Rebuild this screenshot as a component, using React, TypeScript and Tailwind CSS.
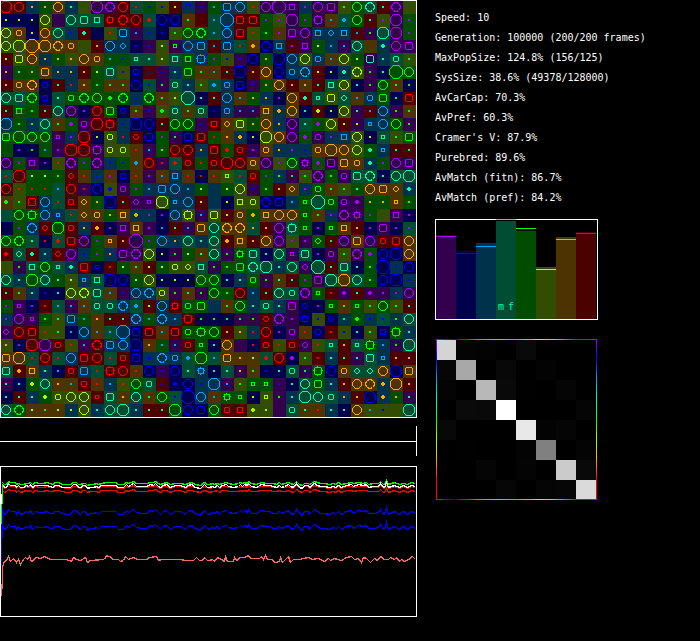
import React from 'react';

type Hue = 'v' | 'b' | 'c' | 't' | 'g' | 'y' | 'o' | 'r';

const HUES: Hue[] = ['v', 'b', 'c', 't', 'g', 'y', 'o', 'r'];
const BRIGHT: Record<string, string> = {
  v: '#aa00ff', b: '#0000ff', c: '#00a5ff', t: '#00ffaa',
  g: '#00ff00', y: '#aaff00', o: '#ffaa00', r: '#ff0000',
};
const DARK: Record<string, string> = {
  v: '#33004d', b: '#00004d', c: '#00324d', t: '#004d33',
  g: '#004d00', y: '#334d00', o: '#4d3300', r: '#4d0000',
};

// One token per deme: background hue, marker hue, marker shape.
const WORLD = [
  'rrC rre co. go. ooe ct. yy- vvC vvD rre tr. gb. yb. ry. cbc vb. gc. ccS cce yr. vve vvO vvs cv. vve vvS yg. gge ttD rt. vvD yy-',
  'by. by. by. yye vv- tte ttS tts rrg rrD rre tr+ bbe bbe og. rr- tc. ccO rrS rrS gv. yv. vvC gv. vvG oc. tc+ gge rt. yv. vvC gv.',
  'yye ooc by. ooe tte cb. rt+ bb- yr. ccS vc. cb. bb. yg. gge ggD tc. cce rrS yr. gg. ov. vvS vve ccs ccd ccs rc. vg. ttC vvC gv.',
  'yye yyC ooO ooC ooD ooc yy- ro. cce ccd bb. vb. yy. vga cce ccS rc. ccS tr. oo+ bbD ccs rv. vvs gy. cc. vc. tte oo- ct+ vve vvS',
  'ry. yyS ooe co. go. yo. ooe ooc gc. gb. tta tt. yy. tts ggs ccG gv. yb. vb. bbe go. bbC cce yye ccc oc. yye gy. vtS ct. ttc yg.',
  'vo. gt. go. ooS co. co. ro. gy. ttS yb. bbc rb. vb. ct. ggS og. oc. rt. bbC ro. ooe bbe ccc ccD ry. by. ct+ yyD vg. bt. ggO gge',
  'ro. ooc ooD bbc rt. cr. oo. gg. og. og. bbe tb. vg. ttc ct. yg. tc+ ccc bbS vb. go. ooe ro. oo. rt. tts yye bt. vg. gge og. bg.',
  'tte ttS ggD bbc tt. ggc ggD gge gg+ ggD cb. ggD og. yy. ttO bt. rt. cce oc. go. co. bv. ooe rt+ tta yyS ttd oc. ccc ggS bg. rrS',
  'rt. ggs gg. rt. tte vve bv. rre ggS bbc og. vb. yg+ ttc og. ttc bb. ccc vc. vc. oos co+ ooe bt. ry+ by. yye vt. rc. cce vg. og.',
  'ccC gg. cg. tte og. gv+ vvc rrC rrG cb. bbC bbe rt. gge gge vb. rrs ood yyS go. ooe co. vve tt. gv+ yye ry. vy. cca cce gge vg.',
  'ggS ggC gge gge vva cv. rrC by. yyc cr. rrd bbG gv. vg. bbS rrS gr. oo. co+ by. yyC ooe vve gv+ vvc cv. ccs yye by. tta yg. ggS',
  'gg- bv. bg. gc. vv. rrC rrC vvG yyc yyc or. vc. gt. rre rre co. rrS gr+ rrc vv. ooc co. cv. cb. ooc ooC ooe yye gt+ cca rt. rg.',
  'vve gv. vvs bv. yr. vvD gv. vvD cb. gb. oc+ rre vr. tr+ rrc gr. rrc rrC rre ooc vve yv. gge vvg gv+ vvS ooS ooc ct+ gv. vve vvS',
  'tr. rrC gy. gy. gg. rrd or. cb. ov. bbc or. vv. oc. ccs or. br. or. yya tr. rrc gv. cg. vg. yg. vvD gg. vvc ttS ttD bt. tte ttC',
  'rre yr. gr. gr. tc. rre vr. bbD yb+ vvc gv. cc. ccS cce cc. gy. cc- gy. yye vb. gg. ro. ood cv. ggc og. yg. gt. ooe ooS ood ct+',
  'og+ yg. rrS cce tr. rrc ood go. bbC rt. vvd vva yyC cca cce ry. cc- by. yys yyc bbD bbS cc. gga ttO ggc vvc vv+ go. go. ooa gg.',
  'tt- gge ggG cce cca tr. ood ooc go. oos co+ cv. bv. cce yyG vc. yyS ry. ooc go+ oos ooe ooe gga og. cv. vvD vvg gv. yy- vvs bv.',
  'bb- gv. ccD rrd ggC rrc co. ro+ bv. vvs oos vv. bc. rt. vc. ooS tte ooD ooD to. ro. vve ttG gga bv. gga oos ro. bv. vvS bv. tv.',
  'gge ggD tt. br. tr+ rrS vve gv. ooa ro. vvO gv. cce co. tte ct. tte ro+ oos ro. ooe vve yv. vv. ggd rg. vve ooS vve rrc rrS ooe',
  'rr+ ttd rt+ ct. rrd vve cb. gv. co. vvS vvD yye by. vg. gy. ot. tte vg. ggg ttS bt. tte vva ttS bv. vvc yg. vvD gv+ bbe bbC ooe',
  'yy- vg. tts gge tta ct+ rrS bba rr. gy. og. ry. gy. yyc yyd tts vg. gg. ggS ttD ttC ct. tte vvd ttO rt. ttS bt. gg. bbO cb. bbe',
  'tte ct. ggC tte gt. yy. cca tts bbC bbe gy. yye by. by. by. gge gge bt. ct. ggc vg. ot. rt. gv. vvS ttC ooC tte gg. bbe bbC cb.',
  'rt. og. ct. bb. bt. yye yyD ttS oc. vb. cce ccD yyc vg. og. vg. gge gg. rre cc. rt. tte ttc vvD gga rr. vv+ rt. vv+ vv. cv. vve',
  'gv. vva bv. rr. tc. vc. oc. ttc ttc ccD tc+ ry. cce rrg ggc ggS cc- og. gge ct. ttc ct. vvS bbd bv. gga og. gga yg. gge yg. rt.',
  'cv. vve vva gg. yg. ccS gc. oo. rt. rt. ccD gc. ccD cc. rrG bg. bg. bg. vg. vg. rrd vvD vv. bbg yb. bbd cg. gg+ cb. tb. cg. tte',
  'vvd rre rrS yr. yg. bc. cce oc. tc. ccO bbS rrS oc. rrS ggc ggG gge ro. yo. cr. rre bv. vvc or. bbc rr. yb. bt. yg. bbs ggG ct.',
  'yo. bv. rrC vvC rrc yr. vc. rrD ccS cce bbC oo. gc. vc. rrc gga bt. ooe vv- br. rrc yr. rrc vvd yr. tta ro. tta ggG cc. vg. ttC',
  'ooS ooC tr. rre tr. cce rrS rre tr. rrc bbS cb+ ccD ccc tc+ ggC tc. ooS oo. oy. tr+ rre bv+ yg. rr. ct. rt. vt. ttS cca ro. ro.',
  'ttS ro+ oos ct. bc. rrc ccS tr. rrG rre or. bbe vb. bbe tt. ccg bt. tt. vo. og. bb. bt. ttc vg. ggG bbe ooc ttd ttd ooe bbC ooS',
  'vt. bt. gy+ tte oo. oc. rrc or. cc. yr. gge ttc rb. bb+ bbe cb. ccC vc. yg. gga gga vb. bt. tte ggS ct. ro. ooe ooD co+ ooC ro.',
  'bt. rt. ct. gy+ yyc yye yye rra ttS oo. tte og. gge tb. bbO cce oc. ggg gga by. yya vg. ct. ttC tte ttc co. ro. bbC co+ go. vt.',
  'tte ggD oy. og. oy. cy. yye ct. tte ttC ct. rt. rt. ggC bbe bbS gge rrc rrs yy+ yy. vv- ttc ot. or. ct. bt. ooe yc. yb. yy- ttC',
].map((row) => row.split(' '));

// Eight-sided outline: n is the half extent, k the half length of a flat side.
const ring = (n: number, k: number) =>
  `M${-k},${-n}L${k},${-n}L${n},${-k}L${n},${k}L${k},${n}L${-k},${n}L${-n},${k}L${-n},${-k}Z`;

const SHAPES: Record<string, string> = {
  a: ring(1.5, 1.5),
  s: ring(2.5, 2.5),
  S: ring(3.5, 2.5),
  d: ring(2.5, 0.5),
  c: ring(2.5, 1.5),
  e: ring(4.5, 1.5),
  D: 'M-.5,-4.5H.5L2.5,-3.5L3.5,-2.5L4.5,-.5V.5L3.5,2.5L2.5,3.5L.5,4.5H-.5L-2.5,3.5L-3.5,2.5L-4.5,.5V-.5L-3.5,-2.5L-2.5,-3.5Z',
  C: ring(5.5, 2.5),
  O: ring(6.5, 2.5),
  g: ring(2.5, 2.5) + 'M-.5,-4V-2M-.5,2V4M-4,-.5H-2M2,-.5H4',
  G: ring(3.5, 2.5) + 'M-.5,-5V-3M-.5,3V5M-5,-.5H-3M3,-.5H5',
};

function Marker({ shape, color }: { shape: string; color: string }) {
  if (shape === '-') return null;
  if (shape === '.') return <rect x={-1} y={-1} width={2} height={2} fill={color} />;
  if (shape === '+') return <path d="M-1,-2H1V-1H2V1H1V2H-1V1H-2V-1H-1Z" fill={color} />;
  return <path d={SHAPES[shape]} fill="none" stroke={color} strokeWidth={1.4} />;
}

function World() {
  return (
    <svg className="block" width={417} height={418} shapeRendering="crispEdges" role="img" aria-label="World map">
      {WORLD.map((row, r) =>
        row.map((cell, c) => (
          <rect key={`${r}-${c}`} x={c * 13} y={1 + r * 13} width={13} height={13} fill={DARK[cell[0]]} />
        )),
      )}
      {WORLD.map((row, r) =>
        row.map((cell, c) => (
          <g key={`${r}-${c}`} transform={`translate(${6 + c * 13} ${7 + r * 13})`}>
            <Marker shape={cell[2]} color={BRIGHT[cell[1]]} />
          </g>
        )),
      )}
      <rect x={0.5} y={0.5} width={416} height={417} fill="none" stroke="#fff" />
    </svg>
  );
}

// Fluctuation over time in thirds of a pixel: x, y pairs.
const WAVE =
  '8,330 14,342 20,340 26,328 32,333 45,333 50,342 55,334 60,342 70,340 78,334 84,338 90,330 98,342 106,332 118,335 130,335 140,332 150,338 158,340 166,333 175,332 186,340 200,342 212,342 220,330 228,330 234,340 240,342 250,334 256,334 262,345 270,340 280,340 290,336 296,342 304,334 320,333 345,333 355,342 370,342 378,330 385,336 400,328 410,336 425,338 440,338 450,330 460,333 465,328 475,336 480,342 490,334 500,330 512,342 525,334 540,334 555,342 565,334 575,330 585,340 600,345 612,330 622,340 629,342 636,336 644,340 651,334 659,342 666,334 679,331 686,337 699,340 714,337 721,331 727,337 734,331 741,335 746,328 754,338 769,340 784,330 799,334 809,334 819,338 829,340 839,332 844,340 852,336 864,331 871,338 879,342 889,328 899,340 906,345 914,334 924,334 929,342 944,328 952,333 961,338 974,338 989,343 999,336 1006,342 1014,333 1024,343 1039,334 1054,331 1061,338 1074,330 1089,334 1099,330 1104,340 1124,338 1134,336 1142,328 1149,342 1154,342 1160,322 1165,342 1184,332 1199,343 1209,334 1222,342 1234,333 1246,338';
const PINK =
  '4,543 6,486 8,453 12,438 20,436 26,424 32,438 40,431 50,442 55,434 62,448 70,434 76,428 82,434 88,424 94,438 108,426 120,430 132,425 150,432 200,432 215,438 221,426 230,432 240,436 256,428 262,442 270,436 312,434 320,422 333,426 338,434 355,434 360,438 370,436 377,424 384,432 400,428 412,432 440,432 448,428 468,425 475,436 485,434 500,434 510,432 525,432 540,434 555,436 580,436 590,427 598,436 608,436 614,428 622,436 629,437 636,432 644,438 652,428 664,434 672,438 677,424 682,438 699,438 704,428 710,436 722,426 734,428 746,421 752,430 779,431 785,423 790,432 797,421 802,432 814,432 827,442 837,438 842,427 848,442 856,434 866,423 872,442 879,432 899,434 924,428 936,434 954,430 974,438 984,431 992,436 1002,430 1012,434 1024,435 1039,428 1054,425 1064,432 1076,430 1084,442 1091,427 1099,430 1111,442 1124,430 1132,436 1142,424 1152,434 1164,434 1172,428 1182,432 1189,428 1199,438 1204,432 1212,439 1224,433 1236,425 1246,434';

const pairs = (s: string) => s.split(' ').map((p) => p.split(',').map(Number));
const line = (pts: number[][]) =>
  pts.map(([x, y]) => `${Math.floor(x / 3) + 0.5},${Math.floor((y - 153) / 3) + 0.5}`).join(' ');
const series = (center: number, gain: number) =>
  line(pairs(WAVE).map(([x, y]) => [x, center + (y - 337) * gain]));

const SERIES = [
  { color: '#ff0000', points: series(217, 0.5) },
  { color: '#ff0000', points: series(229, 0.5) },
  { color: '#0000ff', points: series(293, 1) },
  { color: '#0000ff', points: series(338, 1) },
  { color: '#ff6666', points: line(pairs(PINK)) },
  { color: '#00ff00', points: series(206, 0.6) },
  { color: '#ffffff', points: series(214, 0.8) },
];

function History() {
  return (
    <svg className="mt-2.5 block" width={417} height={151} shapeRendering="crispEdges" role="img" aria-label="History">
      {SERIES.map((s, i) => (
        <polyline key={i} points={s.points} fill="none" stroke={s.color} strokeWidth={1.3} />
      ))}
      <path d="M1.5,58V99M2.5,42V72" stroke="#0000ff" />
      <path d="M1.5,37V58M2.5,18V38" stroke="#00ff00" />
      <path d="M1.5,28V38" stroke="#fff" />
      <rect x={0.5} y={0.5} width={416} height={150} fill="none" stroke="#fff" />
    </svg>
  );
}

const STATS = [
  'Speed: 10',
  'Generation: 100000 (200/200 frames)',
  'MaxPopSize: 124.8% (156/125)',
  'SysSize: 38.6% (49378/128000)',
  'AvCarCap: 70.3%',
  'AvPref: 60.3%',
  "Cramer's V: 87.9%",
  'Purebred: 89.6%',
  'AvMatch (fitn): 86.7%',
  'AvMatch (pref): 84.2%',
];

// Top of the bar and of its marker, measured down from the frame.
const BARS = [[16, 17], [32, 34], [24, 27], [2, 0], [12, 9], [48, 50], [18, 20], [13, 14]];

function Bars() {
  return (
    <svg className="mt-[11px] block" width={163} height={101} shapeRendering="crispEdges" role="img" aria-label="Trait frequencies">
      <rect x={0.5} y={0.5} width={162} height={100} fill="none" stroke="#fff" />
      {BARS.map(([top, mark], i) => (
        <g key={i}>
          <rect x={1 + i * 20} y={top} width={20} height={100 - top} fill={DARK[HUES[i]]} />
          <rect x={1 + i * 20} y={mark} width={20} height={1} fill={BRIGHT[HUES[i]]} />
        </g>
      ))}
      <text x={63} y={91} fill={BRIGHT.t} className="font-['DejaVu_Sans_Mono',monospace] text-[10px]">m</text>
      <text x={73} y={91} fill={BRIGHT.t} className="font-['DejaVu_Sans_Mono',monospace] text-[10px]">f</text>
    </svg>
  );
}

const MATRIX = [
  [212, 4, 3, 0, 9, 0, 0, 0],
  [6, 168, 0, 8, 0, 3, 0, 0],
  [4, 0, 184, 9, 1, 0, 5, 0],
  [0, 10, 9, 255, 0, 0, 0, 5],
  [8, 0, 0, 0, 232, 3, 5, 0],
  [0, 1, 0, 0, 3, 128, 0, 4],
  [0, 0, 5, 0, 4, 0, 203, 9],
  [0, 0, 0, 6, 0, 5, 6, 218],
];

function Matrix() {
  const stops = HUES.map((h, i) => <stop key={h} offset={i / 8} stopColor={BRIGHT[h]} />);
  return (
    <svg className="mt-[19px] ml-px block" width={161} height={161} shapeRendering="crispEdges" role="img" aria-label="Mating matrix">
      <defs>
        <linearGradient id="across">{stops}</linearGradient>
        <linearGradient id="down" x1="0" y1="0" x2="0" y2="1">{stops}</linearGradient>
      </defs>
      {MATRIX.map((row, r) =>
        row.map((v, c) => (
          <rect key={`${r}-${c}`} x={c * 20} y={1 + r * 20} width={20} height={20} fill={`rgb(${v},${v},${v})`} />
        )),
      )}
      <rect x={0} y={0} width={1} height={161} fill="url(#down)" />
      <rect x={160} y={0} width={1} height={161} fill="url(#down)" />
      <rect x={0} y={0} width={161} height={1} fill="url(#across)" />
      <rect x={0} y={160} width={161} height={1} fill="url(#across)" />
    </svg>
  );
}

export default function App() {
  return (
    <main className="flex min-h-screen items-start gap-[18px] bg-black font-['DejaVu_Sans_Mono',monospace] text-white">
      <section className="shrink-0">
        <World />
        <div className="mt-2 flex h-[30px] items-center border-r border-white">
          <div className="h-px w-full bg-white" />
        </div>
        <History />
      </section>
      <section className="shrink-0 pt-2">
        <ul className="text-[10px] leading-5">
          {STATS.map((s) => (
            <li key={s}>{s}</li>
          ))}
        </ul>
        <Bars />
        <Matrix />
      </section>
    </main>
  );
}
